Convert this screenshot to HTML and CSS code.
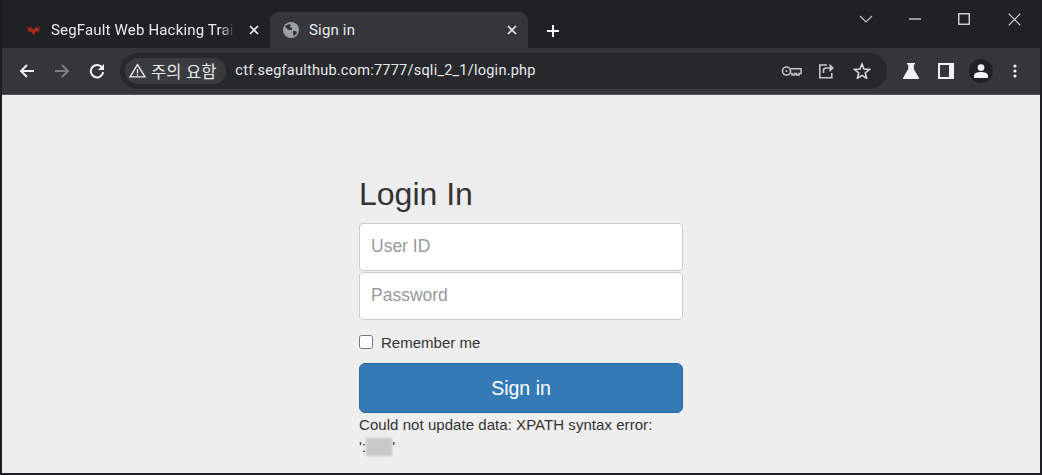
FILE: index.html
```html
<!DOCTYPE html>
<html lang="ko">
<head>
<meta charset="utf-8">
<title>Sign in</title>
<link rel="stylesheet" href="styles.css">
</head>
<body>
<div class="window">
  <div class="tabstrip">
    <div class="tab tab-inactive">
      <svg class="favicon" width="13" height="10" viewBox="0 0 13 10"><path d="M0 1l2.500 2.500L4 1l1 3h3l1-3 1.500 2.500L13 1l-1.500 6L9 6.500 6.500 10 4 6.500 1.500 7z" fill="#a8281a"/></svg>
      <span class="tab-title fade">SegFault Web Hacking Trai</span>
      <svg class="tab-close" width="10" height="10" viewBox="0 0 10 10"><path d="M1 1l8 8M9 1l-8 8" stroke="#e8eaed" stroke-width="1.700"/></svg>
    </div>
    <div class="tab tab-active">
      <svg class="favicon globe" width="16" height="16" viewBox="0 0 16 16"><circle cx="8" cy="8" r="8" fill="#9aa0a6"/><path d="M2 4l4-2 2 1-1 2 2 1v2H6L3 6zM10 9h3l1 2-3 3-1-2z" fill="#35363a"/></svg>
      <span class="tab-title">Sign in</span>
      <svg class="tab-close" width="10" height="10" viewBox="0 0 10 10"><path d="M1 1l8 8M9 1l-8 8" stroke="#e8eaed" stroke-width="1.700"/></svg>
    </div>
    <svg class="new-tab" width="14" height="14" viewBox="0 0 14 14"><path d="M7 1v12M1 7h12" stroke="#fff" stroke-width="2"/></svg>
    <div class="win-controls">
      <svg class="win-chevron" width="14" height="8" viewBox="0 0 14 8"><path d="M1 1l6 6 6-6" fill="none" stroke="#bdc1c6" stroke-width="1.200"/></svg>
      <svg class="win-min" width="12" height="2" viewBox="0 0 12 2"><path d="M0 1h12" stroke="#d5d7da" stroke-width="1.300"/></svg>
      <svg class="win-max" width="12" height="12" viewBox="0 0 12 12"><rect x=".75" y=".75" width="10.500" height="10.500" fill="none" stroke="#d5d7da" stroke-width="1.400"/></svg>
      <svg class="win-close" width="13" height="13" viewBox="0 0 13 13"><path d="M.7.7l11.600 11.600M12.300.7L.7 12.300" stroke="#d5d7da" stroke-width="1.200"/></svg>
    </div>
  </div>
  <div class="toolbar">
    <svg class="nav" width="16" height="16" viewBox="0 0 16 16"><path d="M15 8H2M8 2L2 8l6 6" fill="none" stroke="#f1f3f4" stroke-width="2"/></svg>
    <svg class="nav" width="16" height="16" viewBox="0 0 16 16"><path d="M1 8h13M8 2l6 6-6 6" fill="none" stroke="#7c7f84" stroke-width="2"/></svg>
    <svg class="nav" width="16" height="16" viewBox="0 0 16 16"><path d="M13.400 5A6.200 6.200 0 1 0 14.200 9" fill="none" stroke="#f1f3f4" stroke-width="2"/><path d="M15 1v6H9z" fill="#f1f3f4"/></svg>
    <div class="omnibox">
      <div class="chip">
        <svg width="17" height="15" viewBox="0 0 16 14"><path d="M8 1.500L15 13H1zM8 5.500v4M8 10.500v1.500" fill="none" stroke="#e8eaed" stroke-width="1.300"/></svg>
        <span>주의 요함</span>
      </div>
      <span class="url">ctf.segfaulthub.com:7777/sqli_2_1/login.php</span>
      <div class="omni-icons">
        <svg width="21" height="12" viewBox="0 0 21 12"><circle cx="5.500" cy="6" r="4" fill="none" stroke="#c4c7ca" stroke-width="1.600"/><circle cx="5.500" cy="6" r="1" fill="#c4c7ca"/><path d="M9.500 3.800H20v4.600h-2V10h-2.500V8.400h-2V10H11V8.400H9.500" fill="none" stroke="#c4c7ca" stroke-width="1.500"/></svg>
        <svg class="share" width="17" height="17" viewBox="0 0 17 17"><path d="M9 3H1.800v12.800h12V11" fill="none" stroke="#c4c7ca" stroke-width="1.600"/><path d="M5.500 11V8.500Q5.500 6 8.500 6H12" fill="none" stroke="#c4c7ca" stroke-width="1.600"/><path d="M11.500 1.800L16 6l-4.500 4.200z" fill="#c4c7ca"/></svg>
        <svg width="18" height="17" viewBox="0 0 18 17"><path d="M9 2l2 5 5.500.4-4.200 3.600 1.300 5.300L9 13.400l-4.600 2.900L5.700 11 1.500 7.400 7 7z" fill="none" stroke="#d5d7da" stroke-width="1.600"/></svg>
      </div>
    </div>
    <div class="ext-icons">
      <svg width="16" height="16" viewBox="0 0 16 16"><path d="M4 0h8v1.500h-1.200V6L16 15q.2 1-1 1H1q-1.200 0-1-1l5.200-9V1.500H4z" fill="#f1f3f4"/></svg>
      <svg width="16" height="16" viewBox="0 0 16 16"><path d="M0 0h16v16H0zM2 2v12h9V2z" fill="#f1f3f4" fill-rule="evenodd"/></svg>
      <div class="avatar"><svg width="14" height="14" viewBox="0 0 14 14"><circle cx="7" cy="3.600" r="3.400" fill="#f1f3f4"/><path d="M0 14v-2.500C0 9 4 8 7 8s7 1 7 3.500V14z" fill="#f1f3f4"/></svg></div>
      <svg class="menu-dots" width="4" height="14" viewBox="0 0 4 14"><circle cx="2" cy="2" r="1.600" fill="#f1f3f4"/><circle cx="2" cy="7" r="1.600" fill="#f1f3f4"/><circle cx="2" cy="12" r="1.600" fill="#f1f3f4"/></svg>
    </div>
  </div>
  <main class="content">
    <form class="signin">
      <h2 class="signin-title">Login In</h2>
      <input class="field field-top" type="text" placeholder="User ID">
      <input class="field field-bottom" type="password" placeholder="Password">
      <label class="remember"><input class="check" type="checkbox"><span>Remember me</span></label>
      <button class="submit" type="button">Sign in</button>
      <p class="error">Could not update data: XPATH syntax error:<br>':<span class="redacted">xxxx</span>'</p>
    </form>
  </main>
</div>
</body>
</html>
```

FILE: styles.css
```css
* { box-sizing: border-box; }
html, body { margin: 0; height: 100%; }
body { background: #fff; overflow: hidden; }
.window {
  width: 1042px;
  height: 475px;
  border: 1px solid #1d1e20;
  border-width: 1px 2px 2px 2px;
  display: flex;
  flex-direction: column;
  font-family: "Liberation Sans", Arial, sans-serif;
  overflow: hidden;
}
.tabstrip {
  height: 47px;
  background: #202124;
  display: flex;
  align-items: flex-end;
  flex: none;
  position: relative;
  padding-left: 6px;
}
.tab {
  height: 36px;
  display: flex;
  align-items: center;
  font-family: Roboto, "Liberation Sans", sans-serif;
  font-size: 15px;
  color: #e8eaed;
  letter-spacing: .17px;
}
.tab-inactive { padding: 0 1px 0 19px; width: 262px; }
.tab-active {
  background: #35363a;
  border-radius: 9px 9px 0 0;
  width: 258px;
  padding: 0 11px 0 13px;
}
.favicon { flex: none; margin-right: 11px; }
.globe { margin-right: 10px; }
.tab-title { flex: none; white-space: nowrap; overflow: hidden; }
.fade { -webkit-mask-image: linear-gradient(90deg, #000 92%, transparent); mask-image: linear-gradient(90deg, #000 92%, transparent); width: 184px; }
.tab-close { flex: none; margin-left: auto; margin-right: 10px; }
.tab-active .tab-close { margin-right: 0; }
.new-tab { align-self: center; margin: 12px 0 0 18px; flex: none; }
.win-controls { position: absolute; inset: 0 0 auto auto; display: flex; align-items: center; height: 36px; }
.win-chevron { margin-right: 36px; }
.win-min { margin-right: 37px; }
.win-max { margin-right: 38px; }
.win-close { margin-right: 19px; }
.toolbar {
  height: 47px;
  background: #35363a;
  flex: none;
  display: flex;
  align-items: center;
  padding: 0 0 1px 17px;
  border-bottom: 1px solid #55565a;
}
.nav { flex: none; margin-right: 19px; }
.omnibox {
  margin-left: -4px;
  height: 36px;
  width: 767px;
  background: #27282b;
  border-radius: 18px;
  display: flex;
  align-items: center;
  padding-left: 5px;
  flex: none;
}
.chip {
  height: 26px;
  background: #3a3b3f;
  border-radius: 13px;
  display: flex;
  align-items: center;
  gap: 5px;
  padding: 0 10px 0 4px;
  color: #e8eaed;
  font: 16.500px "Noto Sans CJK KR", sans-serif;
}
.url { font: 14.500px Roboto, sans-serif; color: #e8eaed; margin-left: 9px; white-space: nowrap; letter-spacing: .24px; }
.omni-icons { margin-left: auto; display: flex; align-items: center; gap: 16px; margin-right: 16px; }
.share { margin-right: 2px; }
.ext-icons { display: flex; align-items: center; margin-left: 16px; gap: 19px; }
.avatar { width: 24px; height: 24px; border-radius: 50%; background: #202124; display: flex; align-items: center; justify-content: center; margin: 0 0 0 -4px; }
.menu-dots { margin-left: 1px; }
.content {
  flex: 1;
  background: #eeeeee;
  display: flex;
  justify-content: center;
  min-height: 0;
  overflow: hidden;
}
.signin { width: 324px; padding-top: 80px; }
.signin-title { margin: 0 0 10px; font-size: 32px; font-weight: 400; line-height: 38px; color: #333; }
.field {
  display: block;
  width: 100%;
  height: 48px;
  border: 1px solid #ccc;
  border-radius: 4px;
  padding: 0 11px 2px;
  background: #fff;
  font: 17.500px "Liberation Sans", sans-serif;
  outline: 0;
}
.field::placeholder { color: #999; opacity: 1; }
.field-bottom { margin-top: 1px; }
.remember { display: flex; align-items: center; gap: 8px; margin-top: 13px; height: 18px; font-size: 15px; color: #333; letter-spacing: .02px; }
.check { width: 14px; height: 14px; margin: 0; appearance: none; background: #fff; border: 1px solid #767676; border-radius: 2.500px; }
.submit {
  display: block;
  width: 100%;
  height: 50px;
  margin-top: 12px;
  background: #337ab7;
  border: 1px solid #2e6da4;
  border-radius: 6px;
  color: #fff;
  font: 19.500px "Liberation Sans", sans-serif;
}
.error { margin: 1px 0 0; font-size: 15px; line-height: 22px; color: #333; letter-spacing: .05px; }
.redacted { display: inline-block; width: 26px; height: 18px; background: #c9c9c9; color: transparent; overflow: hidden; vertical-align: -4px; font-size: 10px; line-height: 18px; filter: blur(1px); }
```
